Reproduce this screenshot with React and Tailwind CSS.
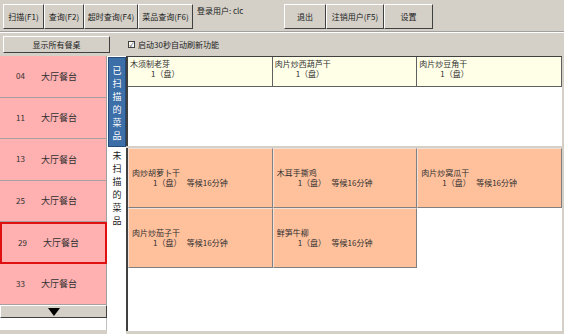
import React from "react";

const raised =
  "border border-t-white border-l-white border-r-[#404040] border-b-[#404040] bg-[#d4d0c8]";

const tables = ["04", "11", "13", "25", "29", "33"];

const scanned = [
  { name: "木须制老芽", qty: "1（盘）" },
  { name: "肉片炒西葫芦干", qty: "1（盘）" },
  { name: "肉片炒豆角干", qty: "1（盘）" },
];

const waiting = [
  { name: "肉炒胡萝卜干", qty: "1（盘）", wait: "等候16分钟" },
  { name: "木耳手撕鸡", qty: "1（盘）", wait: "等候16分钟" },
  { name: "肉片炒窝瓜干", qty: "1（盘）", wait: "等候16分钟" },
  { name: "肉片炒茄子干", qty: "1（盘）", wait: "等候16分钟" },
  { name: "鲜笋牛柳", qty: "1（盘）", wait: "等候16分钟" },
];

const ToolButton = ({ label, width }) => (
  <button className={`${raised} h-[25px] ${width} flex items-center justify-center text-[8px] text-[#202020]`}>
    {label}
  </button>
);

const VerticalLabel = ({ text, active }) => (
  <div
    className={`flex flex-col items-center gap-[3px] text-[9px] leading-[10px] ${
      active
        ? "bg-[#3c6ea8] text-white border border-[#244a78] h-[90px] pt-[8px]"
        : "text-[#202020] h-[100px] pt-[4px]"
    }`}
  >
    {text.split("").map((c, i) => (
      <span key={i}>{c}</span>
    ))}
  </div>
);

const App = () => {
  return (
    <div
      className="w-[564px] h-[334px] bg-[#d4d0c8] overflow-hidden flex flex-col"
      style={{ fontFamily: '"Noto Sans CJK SC", "Liberation Sans", sans-serif' }}
    >
      {/* Toolbar */}
      <div className="flex items-start pt-[4px] pl-[3px] h-[31px]">
        <ToolButton label="扫描(F1)" width="w-[41px]" />
        <ToolButton label="查询(F2)" width="w-[40px]" />
        <ToolButton label="超时查询(F4)" width="w-[54px]" />
        <ToolButton label="菜品查询(F6)" width="w-[55px]" />
        <div className="w-[91px] pl-[4px] pt-[1px] text-[8px] text-[#202020]">登录用户: clc</div>
        <ToolButton label="退出" width="w-[42px]" />
        <ToolButton label="注销用户(F5)" width="w-[58px]" />
        <ToolButton label="设置" width="w-[49px]" />
      </div>
      <div className="h-[2px] border-t border-[#a0a0a0] border-b border-b-white" />

      {/* Second row */}
      <div className="flex items-center h-[23px] pl-[3px]">
        <button className={`${raised} w-[107px] h-[17px] text-[8px] text-[#202020] flex items-center justify-center`}>
          显示所有餐桌
        </button>
        <div className="flex items-center ml-[18px] gap-[3px] text-[8px] text-[#202020]">
          <span className="w-[7px] h-[7px] border border-[#404040] bg-white flex items-center justify-center text-[6px] leading-none">
            ✓
          </span>
          启动30秒自动刷新功能
        </div>
      </div>

      {/* Body */}
      <div className="flex flex-1 min-h-0">
        {/* Tables column */}
        <div className="w-[107px] flex flex-col">
          {tables.map((t) => (
            <div
              key={t}
              className={`h-[41.5px] flex items-center bg-[#ffb0b0] text-[8px] text-[#303030] ${
                t === "29" ? "border-2 border-[#e01010]" : "border-b border-b-[#a8a0a0] border-r border-r-[#a0a0a0]"
              }`}
            >
              <span className="w-[41px] pl-[16px]">{t}</span>
              <span className="text-[9px]">大厅餐台</span>
            </div>
          ))}
          <div className={`${raised} h-[13px] flex items-center justify-center`}>
            <svg width="12" height="8" viewBox="0 0 12 8">
              <path d="M0 0 L12 0 L6 8 Z" fill="#000" />
            </svg>
          </div>
          <div className="h-[12px] bg-white border-r border-[#c0c0c0]" />
        </div>

        {/* Label column */}
        <div className="w-[19px] flex flex-col pt-[1px] pl-[1px] bg-white">
          <VerticalLabel text="已扫描的菜品" active />
          <VerticalLabel text="未扫描的菜品" />
        </div>

        {/* Main */}
        <div className="flex-1 flex flex-col pr-[2px] pb-[3px]">
          <div className="h-[90px] bg-white border-l-2 border-t border-[#404040] flex flex-col">
            <div className="grid grid-cols-3">
              {scanned.map((d) => (
                <div
                  key={d.name}
                  className="h-[30px] bg-[#ffffe8] border-r border-b border-[#606060] px-[2px] pt-[2px] text-[8px] leading-[10px] text-[#303030]"
                >
                  <div>{d.name}</div>
                  <div className="pl-[21px]">{d.qty}</div>
                </div>
              ))}
            </div>
          </div>
          <div className="h-[2px] bg-[#d4d0c8]" />
          <div className="flex-1 bg-white border-l-2 border-[#404040]">
            <div className="grid grid-cols-3">
              {waiting.map((d) => (
                <div
                  key={d.name}
                  className="h-[60px] bg-[#ffc09c] border-r border-b border-[#808080] border-l border-l-[#f0e0d8] border-t border-t-[#f0e0d8] px-[3px] flex flex-col justify-center text-[8px] leading-[10px] text-[#303030]"
                >
                  <div>{d.name}</div>
                  <div className="pl-[21px] whitespace-pre">
                    {d.qty}
                    {"   "}
                    {d.wait}
                  </div>
                </div>
              ))}
            </div>
          </div>
        </div>
      </div>
    </div>
  );
};

export default App;
